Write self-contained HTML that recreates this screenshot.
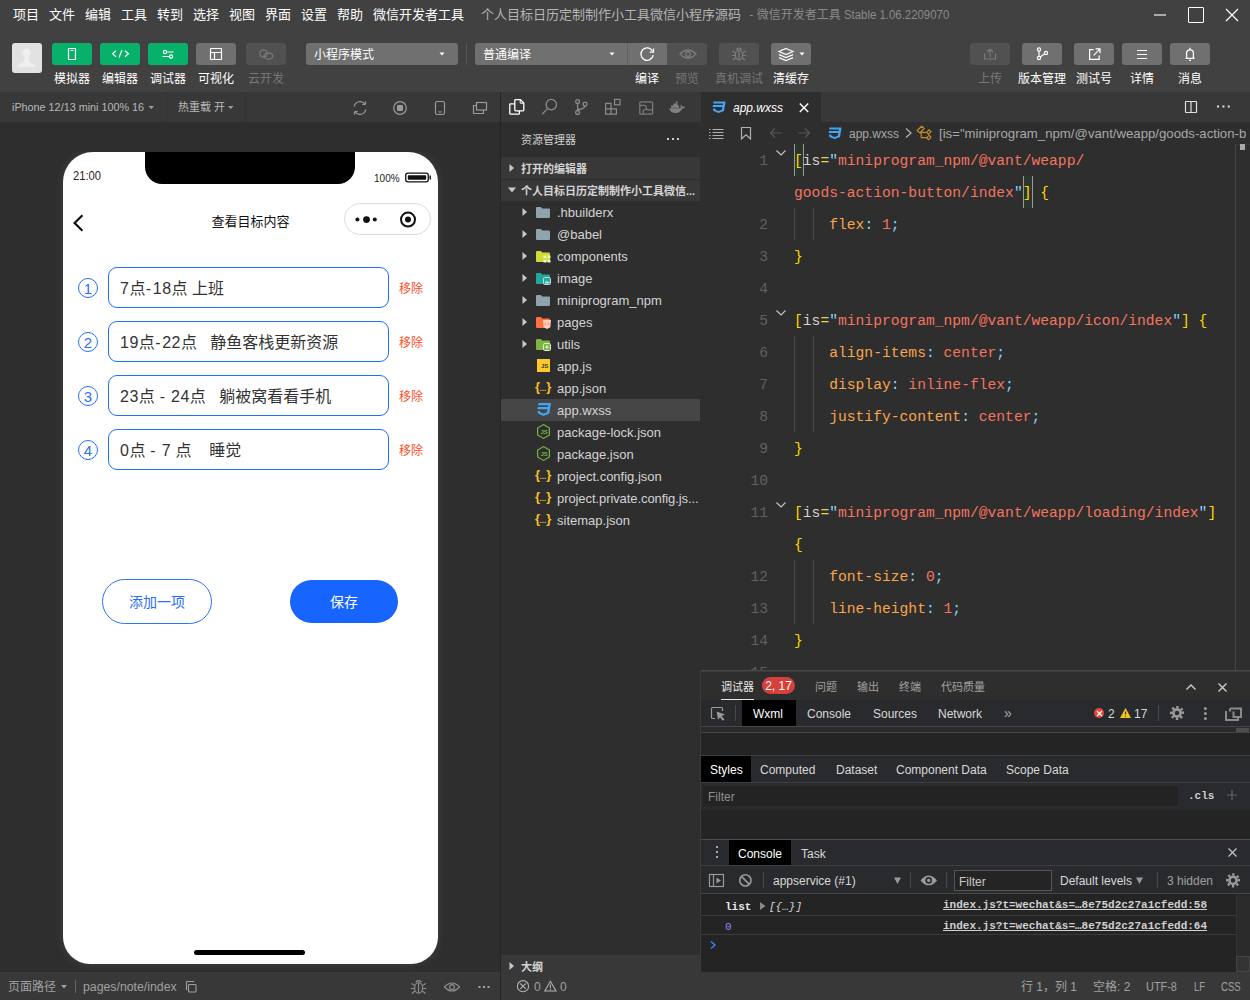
<!DOCTYPE html>
<html lang="zh-CN">
<head>
<meta charset="utf-8">
<title>微信开发者工具</title>
<style>
*{box-sizing:border-box;margin:0;padding:0}
html,body{width:1250px;height:1000px;overflow:hidden;background:#2e2e2e}
body{font-family:"Liberation Sans","Noto Sans CJK SC",sans-serif;font-size:12px;color:#fff;position:relative}
.a{position:absolute;white-space:nowrap}
.t{position:absolute;white-space:nowrap;line-height:22px;height:22px}
svg{position:absolute;overflow:visible}
/* top */
#top{left:0;top:0;width:1250px;height:92px;background:#414141}
.menu{top:4px;font-size:13px;color:#fff}
.tb{top:43px;width:40px;height:22px;border-radius:3px;background:#707070}
.tb.g{background:#07b169}
.tb.d{background:#515151}
.tl{top:68px;font-size:12px;color:#fff;text-align:center;width:60px}
.tl.d{color:#777}
.sel{top:43px;height:22px;background:#707070;border-radius:3px;font-size:12px;line-height:24px;color:#fff;overflow:hidden}
/* bars */
#simbar{left:0;top:92px;width:500px;height:30px;background:#383838}
#actbar{left:501px;top:92px;width:199px;height:30px;background:#383838}
#tabbar{left:700px;top:92px;width:550px;height:30px;background:#383838}
#vsep{left:500px;top:92px;width:1px;height:908px;background:#252525}
/* phone */
#phone{left:63px;top:0;width:375px;height:812px;background:#fff;border-radius:30px 30px 27px 27px;box-shadow:0 0 10px 1px rgba(255,255,255,.08);color:#000}
.inp{left:45px;width:281px;height:41px;border:1px solid #1f6fff;border-radius:9px;font-size:16px;line-height:42px;padding-left:11px;color:#333;white-space:pre}
.num{left:15px;width:20px;height:20px;border:1px solid #2b6ff6;border-radius:50%;color:#2b6ff6;font-size:15px;line-height:19px;text-align:center}
.inp i{font-style:normal;letter-spacing:0.5px}.inp b{font-weight:normal;letter-spacing:1.6px;margin-left:0.4px}
.rm{left:336px;font-size:12px;color:#fb4e1f;margin-top:1px}
/* sidebar */
#side{left:501px;top:122px;width:199px;height:850px;background:#2e2e2e;overflow:hidden}
.row{left:0;width:199px;height:22px;line-height:22px;font-size:13px;color:#d4d4d4}
.row .nm{position:absolute;left:56px;top:1px}
/* editor */
#ed{left:700px;top:122px;width:550px;height:549px;background:#2e2e2e;overflow:hidden}
.ln{margin-top:1px;left:0;width:68px;text-align:right;color:#606060;font:14.6px/32px "Liberation Mono",monospace;height:32px}
.cl{margin-top:1px;left:94px;font:14.67px/32px "Liberation Mono",monospace;height:32px;color:#d4d4d4;white-space:pre}
.y{color:#ffd700}.s{color:#f4745f}.p{color:#f9a54c}.c{color:#86d5fb}.w{color:#d4d4d4}.e{color:#e8d44d}
/* devtools */
#dbg{left:700px;top:671px;width:550px;height:301px;background:#242424;overflow:hidden}
#status{left:0;top:972px;width:1250px;height:28px;background:#383838}
.st{top:4px;font-size:12px;color:#a0a0a0}
</style>
</head>
<body>
<!-- ============ TOP ============ -->
<div id="top" class="a">
  <div class="t menu" style="left:13px">项目</div>
  <div class="t menu" style="left:49px">文件</div>
  <div class="t menu" style="left:85px">编辑</div>
  <div class="t menu" style="left:121px">工具</div>
  <div class="t menu" style="left:157px">转到</div>
  <div class="t menu" style="left:193px">选择</div>
  <div class="t menu" style="left:229px">视图</div>
  <div class="t menu" style="left:265px">界面</div>
  <div class="t menu" style="left:301px">设置</div>
  <div class="t menu" style="left:337px">帮助</div>
  <div class="t menu" style="left:373px">微信开发者工具</div>
  <div class="t" style="left:481px;top:4px;font-size:13px;color:#b4b4b4">个人目标日历定制制作小工具微信小程序源码<span style="font-size:12px;color:#8a8a8a;margin-left:5px"> - 微信开发者工具 <span style="display:inline-block;transform:scaleX(.95);transform-origin:0 50%">Stable 1.06.2209070</span></span></div>
  <!-- window controls -->
  <div class="a" style="left:1154px;top:14px;width:12px;height:2px;background:#aaa"></div>
  <div class="a" style="left:1188px;top:7px;width:16px;height:16px;border:1.500px solid #fff;border-radius:1px"></div>
  <svg style="left:1226px;top:9px" width="12" height="12"><path d="M0 0L12 12M12 0L0 12" stroke="#fff" stroke-width="1.2"/></svg>
  <!-- avatar -->
  <div class="a" style="left:12px;top:43px;width:30px;height:30px;background:#e2e2e2;border-radius:3px;overflow:hidden">
    <svg style="left:0;top:0" width="30" height="30"><circle cx="14.500" cy="10" r="4.200" fill="#efefef"/><path d="M5.500 24Q5.500 21.500 8 20.500Q12 19.200 12.300 17.500V14H16.700V17.500Q17 19.200 21 20.500Q23.500 21.500 23.500 24z" fill="#efefef"/></svg>
  </div>
  <!-- left buttons -->
  <div class="a tb g" style="left:52px"></div>
  <div class="a tb g" style="left:100px"></div>
  <div class="a tb g" style="left:148px"></div>
  <div class="a tb" style="left:196px"></div>
  <div class="a tb d" style="left:246px"></div>
  <div class="t tl" style="left:42px">模拟器</div>
  <div class="t tl" style="left:90px">编辑器</div>
  <div class="t tl" style="left:138px">调试器</div>
  <div class="t tl" style="left:186px">可视化</div>
  <div class="t tl d" style="left:236px">云开发</div>
  <!-- selects -->
  <div class="a sel" style="left:306px;width:152px;padding-left:8px">小程序模式</div>
  <div class="a" style="left:466px;top:43px;width:1px;height:22px;background:#555"></div>
  <div class="a sel" style="left:475px;width:153px;padding-left:8px;border-radius:3px 0 0 3px;border-right:1px solid #606060">普通编译</div>
  <div class="a tb" style="left:628px;width:39px;border-radius:0"></div>
  <div class="a tb d" style="left:667px;border-radius:0 3px 3px 0"></div>
  <div class="a tb d" style="left:719px"></div>
  <div class="a tb" style="left:771px"></div>
  <div class="t tl" style="left:617px">编译</div>
  <div class="t tl d" style="left:657px">预览</div>
  <div class="t tl d" style="left:709px">真机调试</div>
  <div class="t tl" style="left:761px">清缓存</div>

  <!-- right buttons -->
  <div class="a tb d" style="left:970px"></div>
  <div class="a tb" style="left:1022px"></div>
  <div class="a tb" style="left:1074px"></div>
  <div class="a tb" style="left:1122px"></div>
  <div class="a tb" style="left:1170px"></div>
  <div class="t tl d" style="left:960px">上传</div>
  <div class="t tl" style="left:1012px">版本管理</div>
  <div class="t tl" style="left:1064px">测试号</div>
  <div class="t tl" style="left:1112px">详情</div>
  <div class="t tl" style="left:1160px">消息</div>
  <!-- toolbar icons -->
  <svg style="left:0;top:0" width="1250" height="92" fill="none" stroke="#fff" stroke-width="1.2">
    <!-- phone -->
    <rect x="68.5" y="48.5" width="7" height="11" rx="0.5"/><path d="M70.5 50.5H73.5" stroke-width="1"/>
    <!-- code -->
    <path d="M116 50.8L112.6 53.8L116 56.8M125 50.8L128.4 53.8L125 56.8M122 50L119 57.6"/>
    <!-- sliders -->
    <path d="M167 52H173.5M162.5 56.5H169" /><circle cx="165" cy="52" r="1.6"/><circle cx="171" cy="56.5" r="1.6"/>
    <!-- layout -->
    <rect x="210.5" y="48.5" width="11" height="11" rx="0.5"/><path d="M210.5 52.5H221.5M214.5 52.5V59.5"/>
    <!-- cloud -->
    <g stroke="#7a7a7a"><circle cx="263.5" cy="53.5" r="3.6"/><ellipse cx="268.5" cy="56" rx="4.3" ry="3.2"/></g>
    <!-- refresh -->
    <path d="M652.6 51.2A6.2 6.2 0 1 0 653.2 55.2" stroke-width="1.3"/><path d="M653.5 48.5V52.2H649.8" stroke-width="1.3"/>
    <!-- eye -->
    <g stroke="#7d7d7d"><path d="M680 54Q688 46 696 54Q688 62 680 54z"/><circle cx="688" cy="54" r="2.3"/></g>
    <!-- bug -->
    <g stroke="#7d7d7d"><ellipse cx="739" cy="55" rx="3.6" ry="4.8"/><path d="M739 50.5V59.5M736.5 50A2.6 2.6 0 0 1 741.5 50M735.4 53L732.5 51M735.4 55.5H732M735.6 58L732.8 60M742.6 53L745.5 51M742.6 55.5H746M742.4 58L745.2 60"/></g>
    <!-- layers -->
    <path d="M786 48.5L793 51.5L786 54.5L779 51.5zM779 54.6L786 57.6L793 54.6M779 57.6L786 60.6L793 57.6"/>
    <!-- upload -->
    <g stroke="#7a7a7a"><path d="M984.5 53.5V59H995.5V53.5M990 49.5V57M987 52L990 49L993 52"/></g>
    <!-- branch -->
    <circle cx="1039" cy="49.5" r="1.6"/><circle cx="1039" cy="58" r="1.6"/><circle cx="1046" cy="53" r="1.6"/><path d="M1039 51.2V56.3M1044.6 53.8L1040.3 56.9"/>
    <!-- external -->
    <path d="M1093.5 49.7H1089.6V59.3H1099.2V55.4M1093.6 55.3L1099.8 49.1M1095.6 48.9H1100V53.3"/>
    <!-- details -->
    <path d="M1137 50.500H1147M1137 54.500H1147M1137 58.500H1147" stroke-width="1"/>
    <!-- bell -->
    <path d="M1185.5 58.3H1194.5M1186.6 58V53.2A3.4 3.4 0 0 1 1193.4 53.2V58M1190 49.5V47.8M1189 60.3H1191" stroke-width="1.3"/>
  </svg>
  <svg style="left:0;top:0" width="1250" height="92" fill="#fff">
    <path d="M439.5 52.5H444.5L442 55.5z"/><path d="M609.5 52.5H614.5L612 55.5z"/><path d="M799.5 52.5H804.5L802 55.5z"/>
  </svg>
</div>

<!-- ============ SIM BAR ============ -->
<div id="simbar" class="a">
  <div class="t" style="left:12px;top:4px;font-size:10.8px;color:#b8b8b8">iPhone 12/13 mini 100% 16</div>
  <div class="t" style="left:178px;top:4px;font-size:11px;color:#b8b8b8">热重载 开</div>
</div>
<div class="a" style="left:166px;top:92px;width:1px;height:30px;background:#323232"></div><div class="a" style="left:245px;top:92px;width:1px;height:30px;background:#323232"></div>
<div id="actbar" class="a"></div>
<div id="tabbar" class="a">
  <div class="a" style="left:1px;top:0;width:120px;height:30px;background:#2e2e2e"></div>
  <div class="t" style="left:33px;top:5px;font-size:12px;font-style:italic;color:#fff">app.wxss</div>
</div>



<!-- ============ PHONE ============ -->
<div class="a" style="left:0;top:152px;width:500px;height:820px;overflow:hidden">
<div id="phone" class="a">
  <div class="a" style="left:82px;top:0;width:210px;height:32px;background:#000;border-radius:0 0 17px 17px"></div>
  <div class="t" style="left:9.500px;top:12.500px;font-size:13px;color:#222;transform:scaleX(.86);transform-origin:0 0">21:00</div>
  <div class="t" style="left:310.500px;top:15px;font-size:11.5px;color:#222;transform:scaleX(.87);transform-origin:0 0">100%</div>
  <div class="t" style="left:0;top:59px;width:375px;text-align:center;font-size:13px;color:#111">查看目标内容</div>
  <div class="a" style="left:281px;top:51px;width:87px;height:32px;border:1px solid #dcdcdc;border-radius:16px"></div>


  <svg style="left:0;top:0" width="375" height="100" fill="none">
    <!-- battery -->
    <rect x="342.7" y="21.2" width="22.6" height="8.6" rx="2.2" stroke="#111" stroke-width="1.3"/><rect x="344.8" y="23.2" width="18.4" height="4.6" rx="0.8" fill="#111"/><path d="M367.2 24V27" stroke="#111" stroke-width="1.4" stroke-linecap="round"/>
    <!-- back -->
    <path d="M19.400 63.200L11.600 71L19.400 78.800" stroke="#111" stroke-width="2.200"/>
    <!-- capsule dots -->
    <circle cx="294.400" cy="67.600" r="2" fill="#111"/><circle cx="303.500" cy="67.600" r="3.400" fill="#111"/><circle cx="311.800" cy="67.600" r="2" fill="#111"/>
    <circle cx="345" cy="67.6" r="7" stroke="#111" stroke-width="2"/><circle cx="345" cy="67.6" r="3" fill="#111"/>
  </svg>
  <div class="a num" style="top:126px">1</div><div class="a inp" style="top:115px"><i>7</i>点<b>-</b><i>18</i>点 上班</div><div class="t rm" style="top:125px">移除</div>
  <div class="a num" style="top:180px">2</div><div class="a inp" style="top:169px"><i>19</i>点<b>-</b><i>22</i>点   静鱼客栈更新资源</div><div class="t rm" style="top:179px">移除</div>
  <div class="a num" style="top:234px">3</div><div class="a inp" style="top:223px"><i>23</i>点 <b>-</b> <i>24</i>点   躺被窝看看手机</div><div class="t rm" style="top:233px">移除</div>
  <div class="a num" style="top:288px">4</div><div class="a inp" style="top:277px"><i>0</i>点 <b>-</b> <i>7</i> 点    睡觉</div><div class="t rm" style="top:287px">移除</div>

  <div class="a" style="left:39px;top:427px;width:110px;height:44.500px;border:1px solid #2b73f7;border-radius:22.500px;color:#2b6df5;font-size:14px;line-height:44px;text-align:center">添加一项</div>
  <div class="a" style="left:227px;top:428px;width:108px;height:43px;background:#1765fe;border-radius:21.500px;color:#fff;font-size:14px;line-height:44px;text-align:center">保存</div>
  <div class="a" style="left:131px;top:798px;width:111px;height:5px;border-radius:3px;background:#000"></div>
</div>
</div>

<!-- ============ SIDEBAR ============ -->
<div id="side" class="a">
  <div class="t" style="left:20px;top:7px;font-size:11px;color:#d0d0d0">资源管理器</div>
  <div class="a" style="left:166px;top:16px;width:2px;height:2px;background:#d0d0d0;box-shadow:5px 0 #d0d0d0,10px 0 #d0d0d0"></div>
  <div class="a" style="left:0;top:35px;width:199px;height:22px;background:#383838"></div>
  <div class="a" style="left:0;top:57px;width:199px;height:22px;background:#383838;border-top:1px solid #2e2e2e"></div>
  <svg style="left:8px;top:42px" width="6" height="8"><path d="M0.5 0L5 4L0.5 8z" fill="#c8c8c8"/></svg>
  <svg style="left:7px;top:65px" width="8" height="6"><path d="M0 0.5L8 0.5L4 5.5z" fill="#c8c8c8"/></svg>
  <div class="t" style="left:20px;top:36px;font-size:11px;font-weight:bold;color:#d4d4d4">打开的编辑器</div>
  <div class="t" style="left:20px;top:58px;font-size:11px;font-weight:bold;color:#d4d4d4">个人目标日历定制制作小工具微信...</div>
  <div class="a row" style="top:79px"><svg style="left:21px;top:7px" width="6" height="8"><path d="M0.5 0L5 4L0.5 8z" fill="#c8c8c8"/></svg><svg style="left:35px;top:6px" width="14" height="11"><path d="M0 1.100Q0 0 1.100 0H4.800L6.300 1.600H12.900Q14 1.600 14 2.700V9.900Q14 11 12.900 11H1.100Q0 11 0 9.900z" fill="#90a4ae"/></svg><span class="nm">.hbuilderx</span></div>
  <div class="a row" style="top:101px"><svg style="left:21px;top:7px" width="6" height="8"><path d="M0.5 0L5 4L0.5 8z" fill="#c8c8c8"/></svg><svg style="left:35px;top:6px" width="14" height="11"><path d="M0 1.100Q0 0 1.100 0H4.800L6.300 1.600H12.900Q14 1.600 14 2.700V9.900Q14 11 12.900 11H1.100Q0 11 0 9.900z" fill="#90a4ae"/></svg><span class="nm">@babel</span></div>
  <div class="a row" style="top:123px"><svg style="left:21px;top:7px" width="6" height="8"><path d="M0.5 0L5 4L0.5 8z" fill="#c8c8c8"/></svg><svg style="left:35px;top:6px" width="14" height="11"><path d="M0 1.100Q0 0 1.100 0H4.800L6.300 1.600H12.900Q14 1.600 14 2.700V9.900Q14 11 12.900 11H1.100Q0 11 0 9.900z" fill="#cddc39"/></svg><svg style="left:42px;top:10px" width="8" height="8"><path d="M0.500 0.500H3.300V3.300H0.500zM4.700 0.500H7.500V3.300H4.700zM0.500 4.700H3.300V7.500H0.500zM4.700 4.700H7.500V7.500H4.700z" fill="#f0f4c3"/></svg><span class="nm">components</span></div>
  <div class="a row" style="top:145px"><svg style="left:21px;top:7px" width="6" height="8"><path d="M0.5 0L5 4L0.5 8z" fill="#c8c8c8"/></svg><svg style="left:35px;top:6px" width="14" height="11"><path d="M0 1.100Q0 0 1.100 0H4.800L6.300 1.600H12.900Q14 1.600 14 2.700V9.900Q14 11 12.900 11H1.100Q0 11 0 9.900z" fill="#26a69a"/></svg><svg style="left:42px;top:10px" width="8" height="8"><rect x="0.500" y="0.500" width="7" height="7" rx="1.200" fill="#26a69a" stroke="#b2dfdb" stroke-width="1"/><path d="M1.500 6L3.500 3.500L5 5L6.500 4V6.500H1.500z" fill="#b2dfdb"/></svg><span class="nm">image</span></div>
  <div class="a row" style="top:167px"><svg style="left:21px;top:7px" width="6" height="8"><path d="M0.5 0L5 4L0.5 8z" fill="#c8c8c8"/></svg><svg style="left:35px;top:6px" width="14" height="11"><path d="M0 1.100Q0 0 1.100 0H4.800L6.300 1.600H12.900Q14 1.600 14 2.700V9.900Q14 11 12.900 11H1.100Q0 11 0 9.900z" fill="#90a4ae"/></svg><span class="nm">miniprogram_npm</span></div>
  <div class="a row" style="top:189px"><svg style="left:21px;top:7px" width="6" height="8"><path d="M0.5 0L5 4L0.5 8z" fill="#c8c8c8"/></svg><svg style="left:35px;top:6px" width="14" height="11"><path d="M0 1.100Q0 0 1.100 0H4.800L6.300 1.600H12.900Q14 1.600 14 2.700V9.900Q14 11 12.900 11H1.100Q0 11 0 9.900z" fill="#ff7043"/></svg><svg style="left:42px;top:9px" width="8" height="9"><path d="M0 0H8L7.300 7.300L4 9L0.700 7.300z" fill="#ffccbc"/><path d="M3 2.800L1.800 4L3 5.200M5 2.800L6.200 4L5 5.200" fill="none" stroke="#ff7043" stroke-width="0.900"/></svg><span class="nm">pages</span></div>
  <div class="a row" style="top:211px"><svg style="left:21px;top:7px" width="6" height="8"><path d="M0.5 0L5 4L0.5 8z" fill="#c8c8c8"/></svg><svg style="left:35px;top:6px" width="14" height="11"><path d="M0 1.100Q0 0 1.100 0H4.800L6.300 1.600H12.900Q14 1.600 14 2.700V9.900Q14 11 12.900 11H1.100Q0 11 0 9.900z" fill="#7cb342"/></svg><svg style="left:42px;top:10px" width="8" height="8"><rect x="0.500" y="0.500" width="7" height="7" rx="1.200" fill="#7cb342" stroke="#dcedc8" stroke-width="1"/><path d="M4 2V6M2 4H6" stroke="#dcedc8" stroke-width="1.200"/></svg><span class="nm">utils</span></div>
  <div class="a row" style="top:233px"><svg style="left:36px;top:4px" width="13" height="13"><rect width="13" height="13" fill="#ffca28"/></svg><span style="position:absolute;left:40px;top:6px;font-size:6px;line-height:10px;font-weight:bold;color:#333">JS</span><span class="nm">app.js</span></div>
  <div class="a row" style="top:255px"><span style="position:absolute;left:34px;top:-1px;font-size:13px;color:#fbc02d;letter-spacing:-0.5px;font-weight:bold">{<span style="font-size:8px;letter-spacing:0;vertical-align:0px">...</span>}</span><span class="nm">app.json</span></div>
  <div class="a row" style="top:277px;background:#464646"><svg style="left:36px;top:4px" width="14" height="13"><path d="M1.5 0H14L12.3 10.6L6.5 13L1 10.6L0.6 8H3L3.2 9.3L6.6 10.6L10 9.3L10.5 6.3H0.3L0.8 4H10.9L11.2 2.3H1.1z" fill="#42a5f5"/></svg><span class="nm">app.wxss</span></div>
  <div class="a row" style="top:299px"><svg style="left:36px;top:3px" width="13" height="15"><path d="M6.5 0.6L12.4 4V11L6.5 14.4L0.6 11V4z" fill="none" stroke="#7cb342" stroke-width="1.2"/></svg><span style="position:absolute;left:39.5px;top:6px;font-size:6px;line-height:10px;font-weight:bold;color:#7cb342">JS</span><span class="nm">package-lock.json</span></div>
  <div class="a row" style="top:321px"><svg style="left:36px;top:3px" width="13" height="15"><path d="M6.5 0.6L12.4 4V11L6.5 14.4L0.6 11V4z" fill="none" stroke="#7cb342" stroke-width="1.2"/></svg><span style="position:absolute;left:39.5px;top:6px;font-size:6px;line-height:10px;font-weight:bold;color:#7cb342">JS</span><span class="nm">package.json</span></div>
  <div class="a row" style="top:343px"><span style="position:absolute;left:34px;top:-1px;font-size:13px;color:#fbc02d;letter-spacing:-0.5px;font-weight:bold">{<span style="font-size:8px;letter-spacing:0;vertical-align:0px">...</span>}</span><span class="nm">project.config.json</span></div>
  <div class="a row" style="top:365px"><span style="position:absolute;left:34px;top:-1px;font-size:13px;color:#fbc02d;letter-spacing:-0.5px;font-weight:bold">{<span style="font-size:8px;letter-spacing:0;vertical-align:0px">...</span>}</span><span class="nm" style="letter-spacing:-0.08px">project.private.config.js...</span></div>
  <div class="a row" style="top:387px"><span style="position:absolute;left:34px;top:-1px;font-size:13px;color:#fbc02d;letter-spacing:-0.5px;font-weight:bold">{<span style="font-size:8px;letter-spacing:0;vertical-align:0px">...</span>}</span><span class="nm">sitemap.json</span></div>
  <div class="a" style="left:0;top:833px;width:199px;height:45px;background:#383838"></div>
  <svg style="left:8px;top:840px" width="6" height="8"><path d="M0.5 0L5 4L0.5 8z" fill="#c8c8c8"/></svg>
  <div class="t" style="left:20px;top:834px;font-size:11px;font-weight:bold;color:#d4d4d4">大纲</div>
</div>

<!-- ============ EDITOR ============ -->
<div id="ed" class="a">
  <div class="t" style="left:149px;top:1px;font-size:12px;color:#a8a8a8">app.wxss</div>
  <svg style="left:205px;top:6px" width="7" height="10"><path d="M1 0.5L6 5L1 9.5" fill="none" stroke="#b4b4b4" stroke-width="1.2"/></svg>
  <div class="t" style="left:239px;top:1px;font-size:13.2px;color:#a8a8a8;width:307px;overflow:hidden">[is="miniprogram_npm/@vant/weapp/goods-action-button/index"]</div>
  <div class="a" style="left:94px;top:22px;width:10px;height:32px;border:1px solid #9a9a9a;border-width:0 1px;background:#2c372c"></div>
  <div class="a" style="left:323px;top:54px;width:10px;height:32px;border:1px solid #9a9a9a;border-width:0 1px;background:#2c372c"></div>
  <div class="a ln" style="top:22px">1</div>
  <svg style="left:76px;top:28px" width="10" height="6"><path d="M0.5 0.5L5 5L9.5 0.5" fill="none" stroke="#c5c5c5" stroke-width="1.2"/></svg>
  <div class="a cl" style="top:22px"><span class="y">[</span>is<span class="e">=</span><span class="c">"</span><span class="s">miniprogram_npm/@vant/weapp/</span></div>
  <div class="a cl" style="top:54px"><span class="s">goods-action-button/index</span><span class="c">"</span><span class="y">]</span> <span class="y">{</span></div>
  <div class="a ln" style="top:86px">2</div>
  <div class="a" style="left:94px;top:86px;width:1px;height:32px;background:#4a4a4a"></div><div class="a" style="left:113px;top:86px;width:1px;height:32px;background:#4a4a4a"></div>
  <div class="a cl" style="top:86px">    <span class="p">flex</span><span class="c">:</span> <span class="s">1</span><span class="c">;</span></div>
  <div class="a ln" style="top:118px">3</div>
  <div class="a cl" style="top:118px"><span class="y">}</span></div>
  <div class="a ln" style="top:150px">4</div>
  <div class="a ln" style="top:182px">5</div>
  <svg style="left:76px;top:188px" width="10" height="6"><path d="M0.5 0.5L5 5L9.5 0.5" fill="none" stroke="#c5c5c5" stroke-width="1.2"/></svg>
  <div class="a cl" style="top:182px"><span class="y">[</span>is<span class="e">=</span><span class="c">"</span><span class="s">miniprogram_npm/@vant/weapp/icon/index</span><span class="c">"</span><span class="y">]</span> <span class="y">{</span></div>
  <div class="a ln" style="top:214px">6</div>
  <div class="a" style="left:94px;top:214px;width:1px;height:32px;background:#4a4a4a"></div><div class="a" style="left:113px;top:214px;width:1px;height:32px;background:#4a4a4a"></div>
  <div class="a cl" style="top:214px">    <span class="p">align-items</span><span class="c">:</span> <span class="s">center</span><span class="c">;</span></div>
  <div class="a ln" style="top:246px">7</div>
  <div class="a" style="left:94px;top:246px;width:1px;height:32px;background:#4a4a4a"></div><div class="a" style="left:113px;top:246px;width:1px;height:32px;background:#4a4a4a"></div>
  <div class="a cl" style="top:246px">    <span class="p">display</span><span class="c">:</span> <span class="s">inline-flex</span><span class="c">;</span></div>
  <div class="a ln" style="top:278px">8</div>
  <div class="a" style="left:94px;top:278px;width:1px;height:32px;background:#4a4a4a"></div><div class="a" style="left:113px;top:278px;width:1px;height:32px;background:#4a4a4a"></div>
  <div class="a cl" style="top:278px">    <span class="p">justify-content</span><span class="c">:</span> <span class="s">center</span><span class="c">;</span></div>
  <div class="a ln" style="top:310px">9</div>
  <div class="a cl" style="top:310px"><span class="y">}</span></div>
  <div class="a ln" style="top:342px">10</div>
  <div class="a ln" style="top:374px">11</div>
  <svg style="left:76px;top:380px" width="10" height="6"><path d="M0.5 0.5L5 5L9.5 0.5" fill="none" stroke="#c5c5c5" stroke-width="1.2"/></svg>
  <div class="a cl" style="top:374px"><span class="y">[</span>is<span class="e">=</span><span class="c">"</span><span class="s">miniprogram_npm/@vant/weapp/loading/index</span><span class="c">"</span><span class="y">]</span></div>
  <div class="a cl" style="top:406px"><span class="y">{</span></div>
  <div class="a ln" style="top:438px">12</div>
  <div class="a" style="left:94px;top:438px;width:1px;height:32px;background:#4a4a4a"></div><div class="a" style="left:113px;top:438px;width:1px;height:32px;background:#4a4a4a"></div>
  <div class="a cl" style="top:438px">    <span class="p">font-size</span><span class="c">:</span> <span class="s">0</span><span class="c">;</span></div>
  <div class="a ln" style="top:470px">13</div>
  <div class="a" style="left:94px;top:470px;width:1px;height:32px;background:#4a4a4a"></div><div class="a" style="left:113px;top:470px;width:1px;height:32px;background:#4a4a4a"></div>
  <div class="a cl" style="top:470px">    <span class="p">line-height</span><span class="c">:</span> <span class="s">1</span><span class="c">;</span></div>
  <div class="a ln" style="top:502px">14</div>
  <div class="a cl" style="top:502px"><span class="y">}</span></div>
  <div class="a ln" style="top:534px">15</div>
  <div class="a" style="left:535px;top:22px;width:1px;height:527px;background:#454545"></div><div class="a" style="left:535px;top:22px;width:15px;height:1px;background:#3a3a3a"></div>
  <div class="a" style="left:540px;top:22px;width:5px;height:6px;background:#a8a8a8"></div>
</div>

<!-- ============ DEBUGGER ============ -->
<div id="dbg" class="a">
  <!-- header row 0-29 -->
  <div class="a" style="left:0;top:0;width:550px;height:29px;background:#2e2e2e;border-top:1px solid #3a3a3a"></div>
  <div class="t" style="left:21px;top:5px;font-size:11px;color:#e7e7e7">调试器</div>
  <div class="a" style="left:21px;top:28px;width:33px;height:1px;background:#e7e7e7"></div>
  <div class="a" style="left:62px;top:6px;width:33px;height:17px;border-radius:9px;background:#d5403a;color:#fff;font-size:12px;line-height:18px;text-align:center">2, 17</div>
  <div class="t" style="left:115px;top:5px;font-size:11px;color:#a0a0a0">问题</div>
  <div class="t" style="left:157px;top:5px;font-size:11px;color:#a0a0a0">输出</div>
  <div class="t" style="left:199px;top:5px;font-size:11px;color:#a0a0a0">终端</div>
  <div class="t" style="left:241px;top:5px;font-size:11px;color:#a0a0a0">代码质量</div>
  <svg style="left:486px;top:13px" width="10" height="6"><path d="M0.5 5.5L5 1L9.5 5.5" fill="none" stroke="#d0d0d0" stroke-width="1.3"/></svg>
  <svg style="left:518px;top:12px" width="9" height="9"><path d="M0.5 0.5L8.5 8.5M8.5 0.5L0.5 8.5" stroke="#d0d0d0" stroke-width="1.3"/></svg>
  <!-- devtools tabs 29-56 -->
  <div class="a" style="left:0;top:29px;width:550px;height:27px;background:#292a2d;border-bottom:1px solid #45474a"></div>
  <div class="a" style="left:42px;top:29px;width:54px;height:26px;background:#000"></div>
  <div class="t" style="left:53px;top:32px;font-size:12px;color:#fff">Wxml</div>
  <div class="t" style="left:107px;top:32px;font-size:12px;color:#d8d8d8">Console</div>
  <div class="t" style="left:173px;top:32px;font-size:12px;color:#d8d8d8">Sources</div>
  <div class="t" style="left:238px;top:32px;font-size:12px;color:#d8d8d8">Network</div>
  <div class="t" style="left:304px;top:31px;font-size:14px;color:#aaa">»</div>
  <div class="a" style="left:394px;top:37px;width:10px;height:10px;border-radius:50%;background:#e5453d"></div>
  <svg style="left:396.5px;top:39.5px" width="5" height="5"><path d="M0 0L5 5M5 0L0 5" stroke="#fff" stroke-width="1.2"/></svg>
  <div class="t" style="left:408px;top:32px;font-size:12px;color:#d8d8d8">2</div>
  <svg style="left:420px;top:37px" width="11" height="10"><path d="M5.5 0L11 10H0z" fill="#f5c518"/><path d="M5.5 3.5V6.5M5.5 7.8V8.8" stroke="#333" stroke-width="1.2"/></svg>
  <div class="t" style="left:434px;top:32px;font-size:12px;color:#d8d8d8">17</div>
  <div class="a" style="left:458px;top:34px;width:1px;height:16px;background:#4a4a4a"></div>
  <!-- slim bar 56-60 -->
  <div class="a" style="left:0;top:56px;width:550px;height:6px;background:#2a2a2a;border-bottom:1px solid #454545"></div>
  <div class="a" style="left:536px;top:57px;width:13px;height:4px;background:#4d4d4d"></div>
  <!-- styles tabs 84-111 -->
  <div class="a" style="left:0;top:84px;width:550px;height:28px;background:#292a2d;border-top:1px solid #3c3e41;border-bottom:1px solid #3c3e41"></div>
  <div class="a" style="left:0;top:85px;width:51px;height:26px;background:#000"></div>
  <div class="t" style="left:10px;top:88px;font-size:12px;color:#fff">Styles</div>
  <div class="t" style="left:60px;top:88px;font-size:12px;color:#d8d8d8">Computed</div>
  <div class="t" style="left:136px;top:88px;font-size:12px;color:#d8d8d8">Dataset</div>
  <div class="t" style="left:196px;top:88px;font-size:12px;color:#d8d8d8">Component Data</div>
  <div class="t" style="left:306px;top:88px;font-size:12px;color:#d8d8d8">Scope Data</div>
  <!-- filter row 112-137 -->
  <div class="a" style="left:0;top:112px;width:550px;height:27px;background:#292a2d"></div>
  <div class="a" style="left:3px;top:115px;width:475px;height:20px;background:#232323"></div>
  <div class="t" style="left:8px;top:115px;font-size:12px;color:#8f8f8f">Filter</div>
  <div class="t" style="left:488px;top:114px;font:bold 11px/22px 'Liberation Mono',monospace;color:#d0d0d0">.cls</div>
  <svg style="left:527px;top:119px" width="10" height="10"><path d="M5 0V10M0 5H10" stroke="#666" stroke-width="1.2"/></svg>
  <!-- drawer header 167-195 -->
  <div class="a" style="left:0;top:168px;width:550px;height:27px;background:#292a2d;border-top:1px solid #4a4c50;border-bottom:1px solid #3c3e41"></div>
  <div class="a" style="left:16px;top:175px;width:2px;height:2px;background:#aaa;box-shadow:0 5px #aaa,0 10px #aaa"></div>
  <div class="a" style="left:29px;top:169px;width:62px;height:25px;background:#000"></div>
  <div class="t" style="left:38px;top:172px;font-size:12px;color:#fff">Console</div>
  <div class="t" style="left:101px;top:172px;font-size:12px;color:#d8d8d8">Task</div>
  <svg style="left:528px;top:177px" width="9" height="9"><path d="M0.5 0.5L8.5 8.5M8.5 0.5L0.5 8.5" stroke="#c0c0c0" stroke-width="1.3"/></svg>
  <!-- console toolbar 195-222 -->
  <div class="a" style="left:0;top:195px;width:550px;height:28px;background:#292a2d;border-bottom:1px solid #45474a"></div>
  <div class="a" style="left:63px;top:201px;width:1px;height:16px;background:#4a4a4a"></div>
  <div class="t" style="left:73px;top:199px;font-size:12px;color:#d8d8d8">appservice (#1)</div>
  <div class="a" style="left:210px;top:201px;width:1px;height:16px;background:#4a4a4a"></div>
  <div class="a" style="left:246px;top:201px;width:1px;height:16px;background:#4a4a4a"></div>
  <div class="a" style="left:254px;top:199px;width:98px;height:21px;background:#242424;border:1px solid #555"></div>
  <div class="t" style="left:259px;top:200px;font-size:12px;color:#c8c8c8">Filter</div>
  <div class="t" style="left:360px;top:199px;font-size:12px;color:#d8d8d8">Default levels</div>
  <div class="a" style="left:457px;top:201px;width:1px;height:16px;background:#4a4a4a"></div>
  <div class="t" style="left:467px;top:199px;font-size:12px;color:#a0a0a0">3 hidden</div>
  <!-- log rows -->
  <div class="a" style="left:0;top:244px;width:536px;height:1px;background:#3a3a3a"></div>
  <div class="a" style="left:0;top:263px;width:536px;height:1px;background:#3a3a3a"></div>
  <div class="t" style="left:25px;top:225px;font:bold 11px/22px 'Liberation Mono',monospace;color:#e8e8e8">list</div>
  <svg style="left:60px;top:230.500px" width="6" height="8"><path d="M0 0L5.500 4L0 8z" fill="#8a8a8a"/></svg>
  <div class="t" style="left:69px;top:225px;font:italic 11px/22px 'Liberation Mono',monospace;color:#d8d8d8">[{…}]</div>
  <div class="t" style="left:243px;top:223px;font:bold 11px/22px 'Liberation Mono',monospace;color:#d0d0d0;text-decoration:underline">index.js?t=wechat&amp;s=…8e75d2c27a1cfedd:58</div>
  <div class="t" style="left:25px;top:245px;font:11px/22px 'Liberation Mono',monospace;color:#9980ff">0</div>
  <div class="t" style="left:243px;top:244px;font:bold 11px/22px 'Liberation Mono',monospace;color:#d0d0d0;text-decoration:underline">index.js?t=wechat&amp;s=…8e75d2c27a1cfedd:64</div>
  <svg style="left:10px;top:270px" width="6" height="8"><path d="M1 0.5L5 4L1 7.5" fill="none" stroke="#3b82f6" stroke-width="1.5"/></svg>
  <!-- scrollbar -->
  <div class="a" style="left:536px;top:224px;width:14px;height:77px;background:#2b2b2b;border-left:1px solid #333"></div>
  <div class="a" style="left:536px;top:285px;width:14px;height:16px;background:#333;border:1px solid #444"></div>
</div>

<!-- ============ STATUS ============ -->
<div id="status" class="a">
  <div class="t st" style="left:8px">页面路径</div>
  <div class="a" style="left:75px;top:8px;width:1px;height:13px;background:#666"></div>
  <div class="t st" style="left:83px;font-size:12.3px">pages/note/index</div>
  <div class="t st" style="left:534px">0</div>
  <div class="t st" style="left:560px">0</div>
  <div class="t st" style="left:1021px">行 1，列 1</div>
  <div class="t st" style="left:1093px">空格: 2</div>
  <div class="t st" style="left:1146px;transform:scaleX(.91);transform-origin:0 0">UTF-8</div>
  <div class="t st" style="left:1193.500px;transform:scaleX(.78);transform-origin:0 0">LF</div>
  <div class="t st" style="left:1220.500px;transform:scaleX(.8);transform-origin:0 0">CSS</div>
</div>
<svg style="left:0;top:92px" width="1250" height="52" fill="none" stroke="#9a9a9a" stroke-width="1.2">
  <!-- refresh (2 arcs) -->
  <path d="M354.2 14.5A6 6 0 0 1 365 12.2M365.8 17.5A6 6 0 0 1 355 19.8"/><path d="M365.6 9.2V12.6H362.2M354.4 22.8V19.4H357.8" stroke-width="1"/>
  <!-- stop -->
  <circle cx="400" cy="16" r="6.3"/><rect x="397" y="13" width="6" height="6" rx="1" fill="#9a9a9a" stroke="none"/>
  <!-- phone -->
  <rect x="435.5" y="9.5" width="9" height="13" rx="1.5"/><path d="M438.5 20H441.5"/>
  <!-- windows -->
  <rect x="476.500" y="10.500" width="10" height="7.500"/><path d="M476.500 13.500H473.500V21.500H483.500V18"/>
  <!-- files (active) -->
  <g stroke="#fff" stroke-width="1.300"><path d="M515.600 7.600H520.400L523.800 11V18Q523.800 18.800 523 18.800H515.600Q514.800 18.800 514.800 18V8.400Q514.800 7.600 515.600 7.600z"/><path d="M520.200 7.800V11.200H523.600" stroke-width="1"/><path d="M514.800 11.800H510.600Q509.800 11.800 509.800 12.600V21.400Q509.800 22.200 510.600 22.200H518.600Q519.400 22.200 519.400 21.400V18.800"/></g>
  <!-- search -->
  <g stroke="#8a8a8a" stroke-width="1.3"><circle cx="551.3" cy="12.6" r="5.2"/><path d="M547.6 16.4L542.2 22.2"/></g>
  <!-- git -->
  <g stroke="#8a8a8a" stroke-width="1.3"><circle cx="577.6" cy="9.6" r="1.9"/><circle cx="577.6" cy="20.4" r="1.9"/><circle cx="585" cy="12" r="1.9"/><path d="M577.6 11.5V18.5M585 13.9Q585 16.5 577.8 17.6"/></g>
  <!-- extensions -->
  <g stroke="#8a8a8a" stroke-width="1.2"><path d="M605.6 11.4H611V22.2H605.6zM605.6 16.8H616.4V22.2H611"/><rect x="614.6" y="7.4" width="5.4" height="5.4"/></g>
  <!-- save -->
  <g stroke="#7a7a7a" stroke-width="1.300"><rect x="639.800" y="9.800" width="12.800" height="12.400" rx="1.200"/><path d="M639.800 13.400H644.400Q646.200 13.400 646.200 15.200V16Q646.200 17.800 648 17.800H652.600M646.200 17.800H644.500Q643.200 17.800 643.200 19.100V22.200"/></g>
  <!-- docker -->
  <path d="M669.2 16.2H680.4Q681.4 14.2 680.2 12.6Q682 13 682.4 14.8Q684 14.2 685.2 15.2Q684.2 16.6 682.2 16.6Q680.6 21 675.4 21Q670 21 669.2 16.2zM671 13.6H679V15.8H671zM673.4 11.4H677.6V13.4H673.4zM675.8 9.6H677.6V11.2H675.8z" fill="#808080" stroke="none"/>
  <!-- tab css icon -->
  <path d="M713.6 9.4H725.6L724 19L718.6 21L713.4 19L713 16.6H715.2L715.4 17.8L718.6 19L721.8 17.8L722.3 15H712.6L713 13H722.6L722.9 11.4H713.2z" fill="#42a5f5" stroke="none"/>
  <path d="M799.8 11.6L808.2 20M808.2 11.6L799.8 20" stroke="#fff" stroke-width="1.4"/>
  <!-- split + more -->
  <g stroke="#e0e0e0" stroke-width="1.2"><rect x="1185.5" y="9.5" width="11" height="11" rx="0.5"/><path d="M1191 9.5V20.5"/></g>
  <path d="M1217 14.4H1219M1222.4 14.4H1224.4M1227.8 14.4H1229.8" stroke="#e0e0e0" stroke-width="2"/>
  <!-- breadcrumb icons (y offset +30) -->
  <g stroke="#b0b0b0" stroke-width="1.1"><path d="M712.5 37.5H723.5M712.5 40.5H723.5M712.5 43.5H723.5M712.5 46.5H723.5"/><path d="M709 37.5H710.5M709 40.5H710.5M709 43.5H710.5M709 46.5H710.5"/></g>
  <path d="M741.5 35.5H750.5V46.8L746 42.8L741.5 46.8z" stroke="#b0b0b0" stroke-width="1.2"/>
  <path d="M782 41H770.5M775 36.5L770.5 41L775 45.5M798 41H809.5M805 36.5L809.5 41L805 45.5" stroke="#555" stroke-width="1.2"/>
  <path d="M829.6 35.4H841.6L840 45L834.6 47L829.4 45L829 42.6H831.2L831.4 43.8L834.6 45L837.8 43.8L838.3 41H828.6L829 39H838.6L838.9 37.4H829.2z" fill="#42a5f5" stroke="none"/>
  <!-- symbol icon -->
  <g stroke="#c48c2e" stroke-width="1.200" stroke-linejoin="round"><path d="M921.600 34.200L924.200 36.500L919.800 40.900L917.200 38.500zM921.200 40.200V45.700H926.800M921.200 40.300H926.600M929 37.800L931 39.600L928.600 42.200L926.600 40.400zM929 43.300L931 45.100L928.600 47.700L926.600 45.900z"/></g>
</svg>

<svg style="left:0;top:0" width="1250" height="1000" fill="none">
  <!-- inspect -->
  <path d="M722.5 711V708.5Q722.5 707.5 721.5 707.5H712.5Q711.500 707.5 711.5 708.5V717.5Q711.5 718.5 712.5 718.5H715" stroke="#9a9a9a" stroke-width="1.2"/>
  <path d="M716.6 711.6L725 714.6L721.6 716L724.4 719.6L722.8 720.8L720 717.2L718 719.8z" fill="#9a9a9a"/>
  <path d="M735.5 705V721" stroke="#4a4a4a"/>
  <g transform="translate(1177 713)" fill="none" stroke="#9a9a9a"><circle r="3.6" stroke-width="2.6"/><circle r="5.9" stroke-width="2.4" stroke-dasharray="2.3 2.334" transform="rotate(-14)"/></g>
  <circle cx="1205.4" cy="708.6" r="1.5" fill="#9a9a9a"/><circle cx="1205.4" cy="713.5" r="1.5" fill="#9a9a9a"/><circle cx="1205.4" cy="718.4" r="1.5" fill="#9a9a9a"/>
  <path d="M1230 708.5H1241V717H1233.500V711.500M1230 711.5V708.5" stroke="#8a8a8a" stroke-width="2"/><path d="M1226 711V720H1238V717.5" stroke="#8a8a8a" stroke-width="2"/>
  <!-- console toolbar -->
  <rect x="709.5" y="874.5" width="14" height="12" stroke="#9a9a9a" stroke-width="1.2"/><path d="M713.5 874.5V886.5" stroke="#9a9a9a" stroke-width="1.2"/><path d="M716.5 877.5L721 880.5L716.500 883.500z" fill="#9a9a9a"/>
  <circle cx="745.4" cy="880.4" r="5.6" stroke="#9a9a9a" stroke-width="1.6"/><path d="M741.4 876.4L749.4 884.4" stroke="#9a9a9a" stroke-width="1.6"/>
  <path d="M920.5 880.4Q928.700 870.500 937 880.4Q928.700 890.300 920.5 880.4z" fill="#9a9a9a"/><circle cx="928.7" cy="880.4" r="3.3" fill="#292a2d"/><circle cx="928.7" cy="880.4" r="1.7" fill="#9a9a9a"/>
  <g transform="translate(1233 880.4)" fill="none" stroke="#9a9a9a"><circle r="3.6" stroke-width="2.6"/><circle r="5.9" stroke-width="2.4" stroke-dasharray="2.3 2.334" transform="rotate(-14)"/></g>
  <path d="M148.5 106H154L151.250 109.300z" fill="#9a9a9a"/><path d="M228 106H233.500L230.750 109.300z" fill="#9a9a9a"/>
  <path d="M894 877.500H901L897.500 884z" fill="#9a9a9a"/><path d="M1136 877.500H1143L1139.500 884z" fill="#9a9a9a"/>
  <!-- status bar -->
  <path d="M61 985H67L64 988.5z" fill="#a0a0a0"/>
  <path d="M186.500 990V982.300Q186.500 981.500 187.300 981.500H194" stroke="#a0a0a0" stroke-width="1.1"/><rect x="188.500" y="984.5" width="7.500" height="7.500" rx="0.8" stroke="#a0a0a0" stroke-width="1.1"/>
  <g stroke="#909090" stroke-width="1.1"><ellipse cx="418.6" cy="988" rx="4" ry="5.2"/><path d="M418.6 983V993M415.800 982.500A3 3 0 0 1 421.400 982.500M414.700 985.500L411.500 983.500M414.600 988.5H411M414.800 991L411.800 993.500M422.500 985.500L425.700 983.500M422.600 988.5H426.200M422.400 991L425.400 993.500"/></g>
  <g stroke="#909090" stroke-width="1.1"><path d="M444.500 987Q452 979 459.500 987Q452 995 444.500 987z"/><circle cx="452" cy="987" r="2.4"/></g>
  <path d="M478.500 987H480.500M483 987H485M487.500 987H489.500" stroke="#a0a0a0" stroke-width="2"/>
  <g stroke="#b0b0b0" stroke-width="1.1"><circle cx="523" cy="986.2" r="5.6"/><path d="M520.300 983.500L525.700 988.900M525.700 983.500L520.300 988.900"/><path d="M550.400 981.300L556 991H544.800zM550.400 984.500V988M550.400 988.800V989.900"/></g>
</svg>
<div class="a" style="left:701px;top:670px;width:549px;height:1px;background:#474747"></div>
<div class="a" style="left:700px;top:671px;width:1px;height:301px;background:#3a3a3a"></div>
<div id="vsep" class="a"></div>
</body>
</html>
